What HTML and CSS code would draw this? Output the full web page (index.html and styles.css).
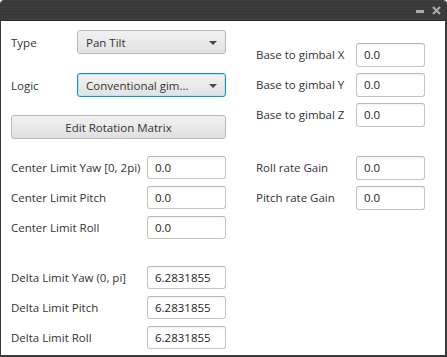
FILE: index.html
```html
<!DOCTYPE html>
<html lang="en">

<head>
    <meta charset="UTF-8">
    <title>Gimbal</title>
    <link rel="stylesheet" href="styles.css">
</head>

<body>
    <div id="window">
        <div id="titlebar">
            <span class="tb-min"></span>
            <svg class="tb-close" width="9" height="9" viewBox="0 0 9 9">
                <path d="M1 1 L8 8 M8 1 L1 8" stroke="#a9a9a9" stroke-width="2.2" />
            </svg>
        </div>

        <div id="content">
            <div class="col col-left">
                <div class="row row-combo">
                    <span class="label">Type</span>
                    <div class="combo">Pan Tilt<span class="arrow"></span></div>
                </div>
                <div class="row row-combo row-logic">
                    <span class="label">Logic</span>
                    <div class="combo focused">Conventional gim...<span class="arrow"></span></div>
                </div>
                <div class="btn">Edit Rotation Matrix</div>

                <div class="group group-center">
                    <div class="row"><span class="label">Center Limit Yaw [0, 2pi)</span><div class="field">0.0</div></div>
                    <div class="row"><span class="label">Center Limit Pitch</span><div class="field">0.0</div></div>
                    <div class="row"><span class="label">Center Limit Roll</span><div class="field">0.0</div></div>
                </div>

                <div class="group group-delta">
                    <div class="row"><span class="label">Delta Limit Yaw (0, pi]</span><div class="field">6.2831855</div></div>
                    <div class="row"><span class="label">Delta Limit Pitch</span><div class="field">6.2831855</div></div>
                    <div class="row"><span class="label">Delta Limit Roll</span><div class="field">6.2831855</div></div>
                </div>
            </div>

            <div class="col col-right">
                <div class="group group-base">
                    <div class="row"><span class="label">Base to gimbal X</span><div class="field">0.0</div></div>
                    <div class="row"><span class="label">Base to gimbal Y</span><div class="field">0.0</div></div>
                    <div class="row"><span class="label">Base to gimbal Z</span><div class="field">0.0</div></div>
                </div>
                <div class="group group-gain">
                    <div class="row"><span class="label">Roll rate Gain</span><div class="field">0.0</div></div>
                    <div class="row"><span class="label">Pitch rate Gain</span><div class="field">0.0</div></div>
                </div>
            </div>
        </div>
    </div>
</body>

</html>
```

FILE: styles.css
```css
body,
html {
    margin: 0;
    padding: 0;
    background: #ffffff;
    overflow: hidden;
}

#window {
    width: 447px;
    height: 357px;
    box-sizing: border-box;
    border: 1px solid #3a3a3a;
    border-top: none;
    border-bottom-width: 2px;
    border-right-width: 2px;
    border-radius: 4px 4px 0 0;
    overflow: hidden;
    font-family: "Open Sans", "Noto Sans", sans-serif;
    font-size: 11.5px;
    color: #333333;
}

#titlebar {
    height: 20px;
    background: repeating-linear-gradient(0deg, #3d3d3d 0px, #3d3d3d 2px, #373737 2px, #373737 3px);
    border-bottom: 1px solid #2b2b2b;
    display: flex;
    align-items: center;
    justify-content: flex-end;
    padding-right: 5px;
    margin: 0 -1px;
}

.tb-min {
    width: 8px;
    height: 3px;
    background: #a9a9a9;
    margin-right: 8px;
    margin-top: 2px;
}

.tb-close {
    margin-top: 1px;
}

#content {
    display: flex;
    padding-left: 10px;
}

.col {
    display: flex;
    flex-direction: column;
}

.col-left {
    width: 215px;
    padding-top: 9px;
}

.col-right {
    margin-left: 30px;
    padding-top: 22px;
}

.row {
    display: flex;
    align-items: center;
    height: 23px;
}

.row + .row {
    margin-top: 7px;
}

.label {
    white-space: nowrap;
}

.col-left .label {
    width: 136px;
}

.col-right .label {
    width: 100px;
}

.row-combo {
    height: 24px;
}

.row-combo .label {
    width: 66px;
}

.row-combo + .row-combo {
    margin-top: 19px;
}

.combo {
    flex: 1;
    height: 24px;
    box-sizing: border-box;
    border: 1px solid #b9b9b9;
    border-radius: 3px;
    background: linear-gradient(#f2f2f2, #e2e2e2);
    display: flex;
    align-items: center;
    padding-left: 8px;
    position: relative;
}

.combo.focused {
    border-color: #0f94d2;
    box-shadow: inset 0 0 0 1px #bfe2f3;
}

.arrow {
    position: absolute;
    right: 8px;
    top: 10px;
    width: 0;
    height: 0;
    border-left: 4px solid transparent;
    border-right: 4px solid transparent;
    border-top: 4px solid #4a4a4a;
}

.btn {
    margin-top: 18px;
    height: 24px;
    box-sizing: border-box;
    border: 1px solid #b9b9b9;
    border-radius: 3px;
    background: linear-gradient(#f2f2f2, #e0e0e0);
    display: flex;
    align-items: center;
    justify-content: center;
}

.field {
    width: 79px;
    height: 23px;
    box-sizing: border-box;
    border: 1px solid #c4c4c4;
    border-top-color: #b8b8b8;
    border-radius: 3px;
    background: linear-gradient(#f4f4f4 0px, #ffffff 3px);
    display: flex;
    align-items: center;
    padding-left: 7px;
    color: #222222;
}

.col-right .field {
    width: 69px;
    height: 24px;
}

.group-center {
    margin-top: 17px;
}

.group-delta {
    margin-top: 27px;
}

.group-gain {
    margin-top: 30px;
}
```
